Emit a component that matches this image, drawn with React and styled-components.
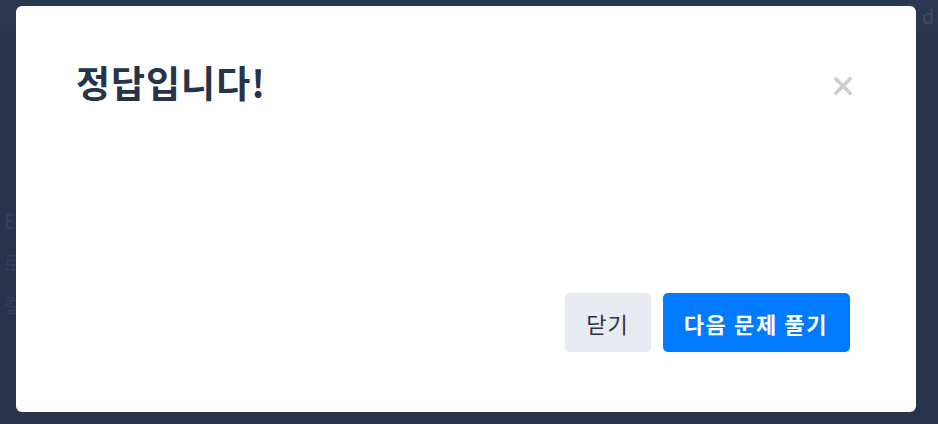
import React from "react";
import styled, { createGlobalStyle } from "styled-components";

const GlobalStyle = createGlobalStyle`
  * { box-sizing: border-box; }
  html, body {
    margin: 0;
    padding: 0;
    background: #27344c;
    font-family: "Noto Sans CJK KR", "Noto Sans", sans-serif;
  }
`;

const Page = styled.div`
  width: 100%;
  height: 424px;
  display: flex;
  flex-direction: column;
  overflow: hidden;
`;

const TopBar = styled.div`
  height: 31px;
  background: #2a374f;
  display: flex;
  justify-content: flex-end;
  align-items: center;
  color: #3c4962;
  font-size: 20px;
  & span {
    width: 16px;
  }
`;

const SideMenu = styled.div`
  display: flex;
  flex-direction: column;
  gap: 20px;
  padding: 179px 0 0 4px;
  color: #34415a;
  font-size: 20px;
  line-height: 22px;
`;

const Overlay = styled.div`
  position: fixed;
  inset: 0;
  display: flex;
  padding: 6px 22px 12px 16px;
`;

const Modal = styled.div`
  flex: 1;
  background: #fff;
  border-radius: 6px;
  display: flex;
  flex-direction: column;
  padding: 55px 62px 60px 60px;
`;

const Header = styled.div`
  display: flex;
  justify-content: space-between;
  align-items: center;
`;

const Title = styled.h2`
  margin: 0;
  font-size: 37px;
  line-height: 43px;
  font-weight: 700;
  color: #253449;
  letter-spacing: 1px;
`;

const CloseBtn = styled.button`
  border: none;
  background: none;
  padding: 0;
  width: 22px;
  height: 22px;
  margin-top: 6px;
  display: flex;
  align-items: center;
  justify-content: center;
  cursor: pointer;
`;

const Footer = styled.div`
  margin-top: auto;
  display: flex;
  justify-content: flex-end;
  gap: 12px;
  padding-right: 4px;
`;

const Button = styled.button`
  height: 59px;
  padding: 0 ${(p) => (p.primary ? "22px 0 21px" : "22px 0 21px")};
  border: none;
  border-radius: 5px;
  font-family: inherit;
  font-size: 22px;
  letter-spacing: ${(p) => (p.primary ? "1.6px" : "1px")};
  font-weight: ${(p) => (p.primary ? 700 : 400)};
  color: ${(p) => (p.primary ? "#ffffff" : "#2b3646")};
  background: ${(p) => (p.primary ? "#007bff" : "#e8ebf2")};
  cursor: pointer;
`;

const CloseIcon = () => (
  <svg width="18" height="18" viewBox="0 0 18 18">
    <path
      d="M2 2 L16 16 M16 2 L2 16"
      stroke="#cdcdcd"
      strokeWidth="3.6"
      strokeLinecap="square"
    />
  </svg>
);

const App = () => {
  return (
    <>
      <GlobalStyle />
      <Page>
        <TopBar>
          <span>d</span>
        </TopBar>
        <SideMenu>
          <div>E</div>
          <div>로</div>
          <div>컬</div>
        </SideMenu>
      </Page>
      <Overlay>
        <Modal>
          <Header>
            <Title>정답입니다!</Title>
            <CloseBtn aria-label="close">
              <CloseIcon />
            </CloseBtn>
          </Header>
          <Footer>
            <Button>닫기</Button>
            <Button primary>다음 문제 풀기</Button>
          </Footer>
        </Modal>
      </Overlay>
    </>
  );
};

export default App;
